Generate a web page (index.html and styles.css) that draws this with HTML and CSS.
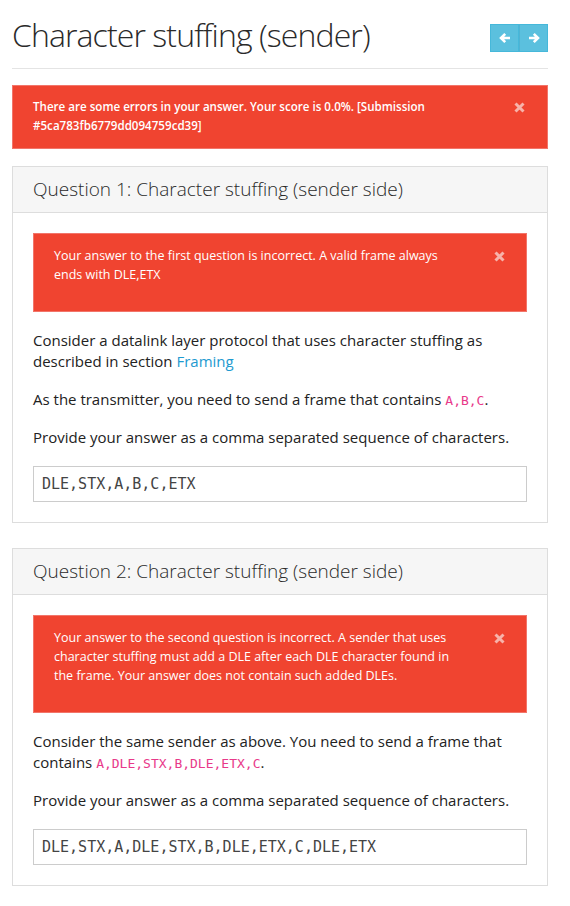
FILE: index.html
```html
<!DOCTYPE html>
<html lang="en">
<head>
    <meta charset="UTF-8">
    <title>Character stuffing (sender)</title>
    <link rel="stylesheet" href="styles.css">
</head>
<body>
    <div class="container">
        <div class="page-header">
            <h1>Character stuffing (sender)</h1>
            <div class="nav-group">
                <button class="nav-btn" title="Previous">
                    <svg width="12" height="12" viewBox="0 0 12 12"><path d="M6.2 1.8 L2 6 L6.2 10.2 M2 6 H11" fill="none" stroke="#fff" stroke-width="2.6"/></svg>
                </button>
                <button class="nav-btn" title="Next">
                    <svg width="12" height="12" viewBox="0 0 12 12"><path d="M5.8 1.8 L10 6 L5.8 10.2 M10 6 H1" fill="none" stroke="#fff" stroke-width="2.6"/></svg>
                </button>
            </div>
        </div>

        <div class="alert alert-main">
            <span>There are some errors in your answer. Your score is 0.0%. [Submission #5ca783fb6779dd094759cd39]</span>
            <a class="close"><svg width="11" height="11" viewBox="0 0 11 11"><path d="M1.5 1.5 L9.5 9.5 M9.5 1.5 L1.5 9.5" stroke="#f7b3aa" stroke-width="3"/></svg></a>
        </div>

        <div class="panel">
            <div class="panel-heading">Question 1: Character stuffing (sender side)</div>
            <div class="panel-body">
                <div class="alert alert-inner">
                    <span>Your answer to the first question is incorrect. A valid frame always ends with DLE,ETX</span>
                    <a class="close"><svg width="11" height="11" viewBox="0 0 11 11"><path d="M1.5 1.5 L9.5 9.5 M9.5 1.5 L1.5 9.5" stroke="#f7b3aa" stroke-width="3"/></svg></a>
                </div>
                <p>Consider a datalink layer protocol that uses character stuffing as described in section <a href="#">Framing</a></p>
                <p>As the transmitter, you need to send a frame that contains <code>A,B,C</code>.</p>
                <p>Provide your answer as a comma separated sequence of characters.</p>
                <input type="text" class="answer" value="DLE,STX,A,B,C,ETX">
            </div>
        </div>

        <div class="panel">
            <div class="panel-heading">Question 2: Character stuffing (sender side)</div>
            <div class="panel-body">
                <div class="alert alert-inner">
                    <span>Your answer to the second question is incorrect. A sender that uses character stuffing must add a DLE after each DLE character found in the frame. Your answer does not contain such added DLEs.</span>
                    <a class="close"><svg width="11" height="11" viewBox="0 0 11 11"><path d="M1.5 1.5 L9.5 9.5 M9.5 1.5 L1.5 9.5" stroke="#f7b3aa" stroke-width="3"/></svg></a>
                </div>
                <p>Consider the same sender as above. You need to send a frame that contains <code>A,DLE,STX,B,DLE,ETX,C</code>.</p>
                <p>Provide your answer as a comma separated sequence of characters.</p>
                <input type="text" class="answer" value="DLE,STX,A,DLE,STX,B,DLE,ETX,C,DLE,ETX">
            </div>
        </div>
    </div>
</body>
</html>
```

FILE: styles.css
```css
* {
    margin: 0;
    padding: 0;
    box-sizing: border-box;
}

body {
    background-color: #fff;
    font-family: 'Open Sans', sans-serif;
    color: #222;
}

.container {
    width: 536px;
    margin: 0 12px;
}

.page-header {
    display: flex;
    justify-content: space-between;
    align-items: flex-start;
    padding-top: 14px;
    padding-bottom: 12px;
    border-bottom: 1px solid #e4e4e4;
    margin-bottom: 16px;
}

.page-header h1 {
    font-size: 32px;
    font-weight: 300;
    letter-spacing: -0.9px;
    line-height: 42px;
    color: #2a2a2a;
}

.nav-group {
    display: flex;
    margin-top: 10px;
}

.nav-btn {
    width: 29px;
    height: 28px;
    background-color: #5bc0de;
    border: 1px solid #46b8da;
    display: flex;
    justify-content: center;
    align-items: center;
    cursor: pointer;
}

.nav-btn + .nav-btn {
    border-left-color: #4fb3d3;
}

.alert {
    background-color: #f04430;
    border: 1px solid #f2756a;
    color: #fff;
    display: flex;
    justify-content: space-between;
    align-items: flex-start;
}

.alert-main {
    padding: 11px 22px 13px 20px;
    font-size: 11.6px;
    font-weight: 600;
    line-height: 19px;
    margin-bottom: 17px;
}

.alert-main span {
    width: 440px;
}

.alert-inner {
    padding: 12px 21px 27px 20px;
    font-size: 12.5px;
    line-height: 19px;
    margin-bottom: 18px;
}

.alert-inner span {
    width: 400px;
}

.close {
    display: flex;
    padding-top: 5px;
    cursor: pointer;
}

.panel {
    border: 1px solid #ddd;
    margin-bottom: 25px;
}

.panel-heading {
    background-color: #f6f6f6;
    border-bottom: 1px solid #ddd;
    padding: 10px 20px 10px 20px;
    font-size: 19px;
    font-weight: 300;
    line-height: 25px;
    color: #2a2a2a;
}

.panel-body {
    padding: 20px 20px 20px 20px;
}

.panel-body p {
    font-size: 15px;
    line-height: 21px;
    margin-bottom: 17px;
}

.panel-body p a {
    color: #1e9ad0;
    text-decoration: none;
}

code {
    font-family: 'DejaVu Sans Mono', monospace;
    font-size: 13px;
    line-height: 1;
    color: #e8398a;
}

.answer {
    width: 100%;
    height: 36px;
    border: 1px solid #ccc;
    padding: 0 8px;
    font-family: 'DejaVu Sans Mono', monospace;
    font-size: 15px;
    color: #444;
    margin-top: 1px;
}
```
